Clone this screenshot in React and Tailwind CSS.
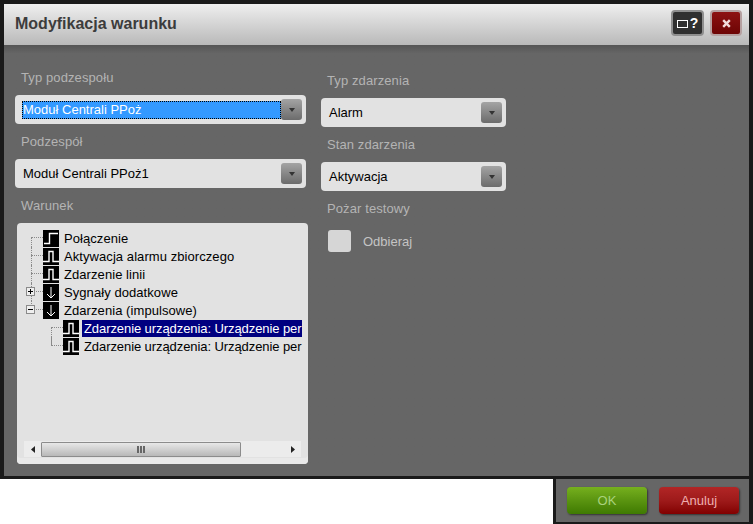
import React from 'react';

function Select({ value, focused, w = 'w-[291px]' }) {
    return (
        <div className={`${w} h-[29px] bg-[#e2e2e2] rounded-[4px] flex items-center pl-[8px] pr-[4px]`}>
            <div className={`flex-1 h-[18px] flex items-center text-[13px] leading-none ${focused ? 'bg-[#3399ff] text-white border border-dotted border-black -ml-[1px]' : 'text-black'}`}>
                {value}
            </div>
            <div className="w-[21px] h-[21px] rounded-[3px] bg-gradient-to-b from-[#a4a4a4] to-[#6c6c6c] flex items-center justify-center">
                <svg width="6" height="4" viewBox="0 0 6 4"><path d="M0 0h6L3 4z" fill="#333" /></svg>
            </div>
        </div>
    );
}

function Label({ children, className = '' }) {
    return <div className={`text-[13px] leading-[16px] tracking-[0.1px] text-[#b4b4b4] ${className}`}>{children}</div>;
}

function TreeIcon({ type }) {
    return (
        <svg width="16" height="17" viewBox="0 0 16 17" className="shrink-0 bg-black">
            {type === 'step' && <path d="M1 13.5h5.5v-10H15" fill="none" stroke="#fff" strokeWidth="1.4" />}
            {type === 'pulse' && <path d="M0 13.5h6v-10h4v10H16" fill="none" stroke="#fff" strokeWidth="1.4" />}
            {type === 'down' && <path d="M8 3v11M4 10l4 4 4-4" fill="none" stroke="#fff" strokeWidth="1" />}
        </svg>
    );
}

function Expander({ open }) {
    return (
        <span className="absolute left-[-5px] top-[4px] w-[9px] h-[9px] border border-[#8a8a8a] bg-[#eee] flex items-center justify-center">
            <span className="absolute w-[5px] h-px bg-black" />
            {!open && <span className="absolute w-px h-[5px] bg-black" />}
        </span>
    );
}

// one row of the tree, the gutter carries the dotted connector lines
function TreeRow({ icon, text, child, first, last, expander, open, selected }) {
    return (
        <div className="flex items-center h-[18px]">
            <div className={`relative shrink-0 h-[18px] ${child ? 'w-[46px]' : 'w-[26px]'}`}>
                <span className={`absolute border-l border-dotted border-[#8a8a8a] ${child ? 'left-[34px]' : 'left-[14px]'} ${first ? 'top-[8px]' : 'top-0'} ${last ? 'h-[9px]' : 'h-[18px]'}`} />
                <span className={`absolute top-[8px] border-t border-dotted border-[#8a8a8a] ${child ? 'left-[34px] w-[12px]' : 'left-[14px] w-[12px]'}`} />
                {expander && <div className="absolute left-[14px] top-0"><Expander open={open} /></div>}
            </div>
            <TreeIcon type={icon} />
            <div className={`ml-[3px] pl-[2px] h-[17px] flex items-center whitespace-nowrap text-[13px] leading-none ${child ? 'tracking-[-0.08px]' : 'tracking-[0.07px]'} ${selected ? 'bg-[#000080] text-white w-[220px]' : 'text-black'}`}>
                {text}
            </div>
        </div>
    );
}

function ScrollBar() {
    return (
        <div className="mx-[7px] mb-[7px] h-[16px] bg-[#ececec] flex items-center">
            <div className="w-[17px] flex justify-center">
                <svg width="4" height="7" viewBox="0 0 4 7"><path d="M4 0v7L0 3.5z" fill="#222" /></svg>
            </div>
            <div className="w-[200px] h-[15px] border border-[#8c8c8c] rounded-[1px] bg-gradient-to-b from-[#e8e8e8] to-[#b8b8b8] flex items-center justify-center gap-px">
                <span className="w-[2px] h-[7px] bg-[#666]" />
                <span className="w-[2px] h-[7px] bg-[#666]" />
                <span className="w-[2px] h-[7px] bg-[#666]" />
            </div>
            <div className="flex-1 flex justify-end pr-[6px]">
                <svg width="4" height="7" viewBox="0 0 4 7"><path d="M0 0v7L4 3.5z" fill="#222" /></svg>
            </div>
        </div>
    );
}

export default function App() {
    return (
        <div className="w-[753px] h-[524px] bg-white flex flex-col font-['Liberation_Sans',Arial,sans-serif]">
            <div className="h-[479px] border-x-4 border-t-4 border-b-[3px] border-[#1a1a1a] bg-[#666] flex flex-col">
                {/* Title bar */}
                <div className="h-[41px] shrink-0 bg-gradient-to-b from-[#efefef] to-[#b9b9b9] flex items-center pl-[11px] pr-[7px]">
                    <h1 className="text-[16px] font-bold text-[#3c3c3c] flex-1 -mt-[2px]">Modyfikacja warunku</h1>
                    <div className="flex gap-[6px] -mt-[3px]">
                        <div className="w-[33px] h-[26px] rounded-[4px] border-[2px] border-[#8f8f8f] bg-[#303030] flex items-center justify-center gap-[2px]">
                            <span className="w-[11px] h-[8px] border border-white mt-[1px]" />
                            <span className="text-white text-[14px] font-bold leading-none">?</span>
                        </div>
                        <div className="w-[32px] h-[26px] rounded-[4px] border-[2px] border-[#b5a0a0] bg-gradient-to-b from-[#8d1212] to-[#6d0505] flex items-center justify-center">
                            <svg width="9" height="9" viewBox="0 0 9 9"><path d="M1.2 1.2l6.6 6.6M7.8 1.2L1.2 7.8" stroke="#f2dcdc" strokeWidth="2.4" /></svg>
                        </div>
                    </div>
                </div>

                {/* Form */}
                <div className="flex-1 flex pl-[11px] bg-gradient-to-b from-[#555] via-[#666] via-[2%] to-[#666]">
                    <div className="w-[293px] pt-[25px]">
                        <Label className="ml-[6px]">Typ podzespołu</Label>
                        <div className="mt-[9px]"><Select value="Moduł Centrali PPoż" focused /></div>
                        <Label className="ml-[6px] mt-[10px]">Podzespół</Label>
                        <div className="mt-[9px]"><Select value="Moduł Centrali PPoż1" /></div>
                        <Label className="ml-[6px] mt-[10px]">Warunek</Label>
                        <div className="mt-[9px] ml-[2px] w-[291px] h-[241px] rounded-[4px] bg-[#e2e2e2] shadow-[inset_0_-6px_0_#e9e9e9] flex flex-col">
                            <div className="flex-1 pt-[6px]">
                                <TreeRow icon="step" text="Połączenie" first />
                                <TreeRow icon="pulse" text="Aktywacja alarmu zbiorczego" />
                                <TreeRow icon="pulse" text="Zdarzenie linii" />
                                <TreeRow icon="down" text="Sygnały dodatkowe" expander />
                                <TreeRow icon="down" text="Zdarzenia (impulsowe)" expander open last />
                                <TreeRow icon="pulse" text="Zdarzenie urządzenia: Urządzenie per" child first selected />
                                <TreeRow icon="pulse" text="Zdarzenie urządzenia: Urządzenie per" child last />
                            </div>
                            <ScrollBar />
                        </div>
                    </div>
                    <div className="ml-[13px] w-[185px] pt-[28px]">
                        <Label className="ml-[6px]">Typ zdarzenia</Label>
                        <div className="mt-[9px]"><Select value="Alarm" w="w-[185px]" /></div>
                        <Label className="ml-[6px] mt-[10px]">Stan zdarzenia</Label>
                        <div className="mt-[9px]"><Select value="Aktywacja" w="w-[185px]" /></div>
                        <Label className="ml-[6px] mt-[10px]">Pożar testowy</Label>
                        <div className="mt-[13px] ml-[7px] flex items-center">
                            <div className="w-[23px] h-[22px] rounded-[3px] bg-[#d6d6d6]" />
                            <span className="ml-[12px] pt-[2px] text-[13px] text-[#c4c4c4]">Odbieraj</span>
                        </div>
                    </div>
                </div>
            </div>

            {/* Footer tab */}
            <div className="flex-1 flex justify-end">
                <div className="w-[200px] border-l-[3px] border-r-4 border-b-2 border-[#1a1a1a] bg-[#666] flex gap-[12px] pl-[11px] pt-[8px]">
                    <div className="w-[80px] h-[27px] rounded-[4px] bg-gradient-to-b from-[#76b01e] via-[#5a9410] via-50% to-[#3f7a02] flex items-center justify-center text-[13px] text-[#a9d27c] shadow-[1px_1px_2px_#333]">OK</div>
                    <div className="w-[80px] h-[27px] rounded-[4px] bg-gradient-to-b from-[#b22626] via-[#9e1a1a] via-50% to-[#820000] flex items-center justify-center text-[13px] text-[#efb0b0] shadow-[1px_1px_2px_#333]">Anuluj</div>
                </div>
            </div>
        </div>
    );
}
